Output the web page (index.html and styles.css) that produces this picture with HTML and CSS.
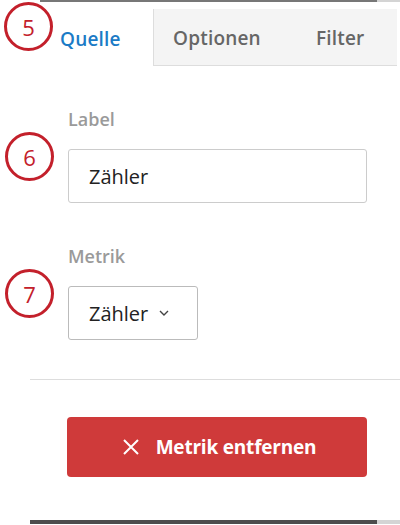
FILE: index.html
```html
<!DOCTYPE html>
<html>
<head>
	<title>Metrik</title>
	<link rel="stylesheet" href="styles.css">
</head>
<body>
	<div class="linie oben">
		<span class="dunkel"></span>
		<span class="hell"></span>
	</div>

	<div class="tabs">
		<span class="kreis kreis5">5</span>
		<div class="tab aktiv">Quelle</div>
		<div class="tabgruppe">
			<div class="tab">Optionen</div>
			<div class="tab">Filter</div>
		</div>
	</div>

	<form class="formular">
		<div class="feld erstes">
			<div class="titel">Label</div>
			<div class="zeile">
				<span class="kreis">6</span>
				<input type="text" class="eingabe" value="Zähler">
			</div>
		</div>

		<div class="feld">
			<div class="titel">Metrik</div>
			<div class="zeile">
				<span class="kreis">7</span>
				<div class="auswahl">
					Zähler
					<svg width="10" height="6" viewBox="0 0 10 6"><path d="M1 1 L5 5 L9 1" fill="none" stroke="#444" stroke-width="1.4"/></svg>
				</div>
			</div>
		</div>
	</form>

	<div class="trenner"></div>

	<div class="aktion">
		<button type="button" class="entfernen">
			<svg width="18" height="18" viewBox="0 0 18 18"><path d="M2 2 L16 16 M16 2 L2 16" stroke="#fff" stroke-width="2"/></svg>
			Metrik entfernen
		</button>
	</div>

	<div class="linie unten">
		<span class="dunkel"></span>
		<span class="hell"></span>
	</div>
</body>
</html>
```

FILE: styles.css
```css
body
{
	margin: 0;
	width: 400px;
	height: 525px;
	overflow: hidden;
	background-color: white;
	font-family: "Open Sans", "Liberation Sans", sans-serif;
}
.linie
{
	display: flex;
}
.linie .hell
{
	width: 23px;
	background-color: #d4d4d4;
}
.linie .dunkel
{
	flex: 1;
}
.oben
{
	height: 2px;
	margin-left: 40px;
}
.oben .dunkel
{
	background-color: #777;
}
.unten
{
	height: 4px;
	margin-left: 30px;
	margin-top: 43px;
}
.unten .dunkel
{
	background-color: #4d4d4d;
}
.tabs
{
	position: relative;
	display: flex;
	height: 64px;
}
.tab
{
	display: flex;
	align-items: center;
	padding-top: 1px;
	font-size: 19px;
	font-weight: 600;
	letter-spacing: 0.2px;
	color: #666;
}
.tab.aktiv
{
	width: 153px;
	box-sizing: border-box;
	padding-left: 60px;
	padding-top: 9px;
	color: #1b7bc6;
}
.tabgruppe
{
	flex: 1;
	display: flex;
	gap: 55px;
	margin-top: 7px;
	margin-right: 3px;
	padding-left: 19px;
	background-color: #f4f4f4;
	border-left: 1px solid #ddd;
	border-bottom: 1px solid #ddd;
}
.kreis
{
	position: absolute;
	width: 43px;
	height: 43px;
	border: 3px solid #c3202b;
	border-radius: 50%;
	display: flex;
	align-items: center;
	justify-content: center;
	font-size: 22px;
	color: #c3202b;
	left: -63px;
	top: -17px;
}
.kreis.kreis5
{
	left: 4px;
	top: 0px;
}
.formular
{
	margin: 0;
	padding: 0 33px 0 68px;
}
.feld
{
	margin-top: 43px;
}
.titel
{
	font-size: 18px;
	line-height: 20px;
	font-weight: 600;
	color: #9a9a9a;
}
.zeile
{
	position: relative;
	margin-top: 20px;
}
.eingabe
{
	width: 100%;
	height: 54px;
	box-sizing: border-box;
	padding: 0 20px;
	border: 1px solid #ccc;
	border-radius: 3px;
	font-family: "Open Sans", "Liberation Sans", sans-serif;
	font-size: 20px;
	color: #222;
	display: block;
}
.auswahl
{
	width: 130px;
	height: 54px;
	box-sizing: border-box;
	padding: 0 20px;
	border: 1px solid #bbb;
	border-radius: 3px;
	display: flex;
	align-items: center;
	gap: 11px;
	font-size: 20px;
	color: #222;
}
.trenner
{
	height: 1px;
	margin: 39px 0 0 30px;
	background-color: #ddd;
}
.aktion
{
	padding: 37px 0 0 67px;
}
.entfernen
{
	width: 300px;
	height: 60px;
	border: none;
	border-radius: 4px;
	background-color: #cf3a3a;
	color: white;
	font-family: "Open Sans", "Liberation Sans", sans-serif;
	font-size: 19px;
	font-weight: bold;
	letter-spacing: -0.2px;
	display: flex;
	align-items: center;
	justify-content: center;
	gap: 16px;
	padding-left: 10px;
}
```
